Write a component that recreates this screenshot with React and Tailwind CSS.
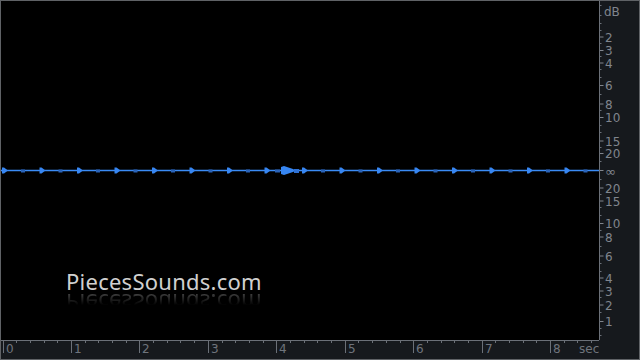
import React from "react";

const dbMarks = [
  { y: 35.5, t: "2" },
  { y: 49, t: "3" },
  { y: 61.5, t: "4" },
  { y: 84, t: "6" },
  { y: 102.5, t: "8" },
  { y: 116, t: "10" },
  { y: 139.5, t: "15" },
  { y: 152, t: "20" },
  { y: 169, t: "∞" },
  { y: 186.5, t: "20" },
  { y: 199.5, t: "15" },
  { y: 222, t: "10" },
  { y: 235.5, t: "8" },
  { y: 254.5, t: "6" },
  { y: 276.5, t: "4" },
  { y: 289.5, t: "3" },
  { y: 303.5, t: "2" },
  { y: 320, t: "1" },
];

const minorDb = [4, 14, 22, 29, 42, 55, 68, 76, 93, 109, 124, 131, 146, 160, 178, 193, 206, 214, 229, 245, 262, 270, 283, 296, 311, 327, 334];

const RightRuler = () => (
  <svg width="40" height="339" className="block shrink-0">
    <line x1="0.5" y1="0" x2="0.5" y2="339" stroke="#6b7078" />
    {minorDb.map((y) => (
      <line key={y} x1="1" y1={y + 0.5} x2="2.5" y2={y + 0.5} stroke="#6b7078" />
    ))}
    {dbMarks.map((m, i) => (
      <g key={i}>
        <line x1="1" y1={m.y + 0.5} x2="4.5" y2={m.y + 0.5} stroke="#80858d" />
        <text
          x="6"
          y={m.y + 1}
          dominantBaseline="central"
          fontSize={m.t === "∞" ? 13 : 12}
          fill="#80858d"
          fontFamily="DejaVu Sans, sans-serif"
        >
          {m.t}
        </text>
      </g>
    ))}
    <text x="5" y="11" dominantBaseline="central" fontSize="12" fill="#80858d" fontFamily="DejaVu Sans, sans-serif">
      dB
    </text>
  </svg>
);

const BottomRuler = () => {
  const step = 68.45;
  const majors = [0, 1, 2, 3, 4, 5, 6, 7, 8];
  const minors = [];
  for (let s = 0; s < 8.9; s++) {
    for (let k = 1; k < 5; k++) {
      const x = 1.5 + step * (s + k / 5);
      if (x < 596) minors.push(x);
    }
  }
  return (
    <svg width="598" height="19" className="block shrink-0">
      <line x1="0" y1="0.5" x2="598" y2="0.5" stroke="#6b7078" />
      {minors.map((x, i) => (
        <line key={i} x1={Math.round(x) + 0.5} y1="1" x2={Math.round(x) + 0.5} y2="3" stroke="#6b7078" />
      ))}
      {majors.map((s) => {
        const x = Math.round(1.5 + step * s) + 0.5;
        return (
          <g key={s}>
            <line x1={x} y1="1" x2={x} y2="13" stroke="#6b7078" />
            <text x={x + 2.5} y="13" fontSize="12" fill="#6f747c" fontFamily="DejaVu Sans, sans-serif">
              {s}
            </text>
          </g>
        );
      })}
      <text x="578" y="13" fontSize="12" fill="#6f747c" fontFamily="DejaVu Sans, sans-serif">
        sec
      </text>
    </svg>
  );
};

const Waveform = () => {
  const y = 169;
  const big = [];
  const small = [];
  for (let i = 0; i < 16; i++) {
    const x = 1 + 37.5 * i;
    if (x < 596) big.push(x);
    if (x + 19 < 596) small.push(x + 19);
  }
  return (
    <svg width="598" height="338" className="block">
      <line x1="0" y1={y + 0.5} x2="598" y2={y + 0.5} stroke="#3a8bf5" strokeWidth="1.3" />
      {small.map((x, i) => (
        <rect key={i} x={x} y={y - 0.5} width="4" height="3" fill="#2a63b8" />
      ))}
      {big.map((x, i) => (
        <polygon
          key={i}
          points={`${x},${y - 2.5} ${x + 2},${y - 2.5} ${x + 6},${y + 0.5} ${x + 2},${y + 3.5} ${x},${y + 3.5}`}
          fill="#3786f2"
        />
      ))}
      <polygon
        points={`${280},${y - 3} ${283},${y - 4} ${286},${y - 3} ${292},${y - 1} ${294},${y + 0.5} ${292},${y + 2} ${286},${y + 4} ${283},${y + 5} ${280},${y + 4}`}
        fill="#3786f2"
      />
      <rect x="274" y={y - 0.5} width="5" height="3" fill="#2a63b8" />
      <rect x="293" y={y - 1} width="5" height="4" fill="#2f72d6" />
    </svg>
  );
};

export default function App() {
  return (
    <div className="w-[640px] h-[360px] border border-[#5f6266] bg-[#16191d] flex flex-col overflow-hidden">
      <div className="flex h-[339px]">
        <div className="relative w-[598px] h-[339px] bg-black">
          <Waveform />
          <div className="absolute left-[65px] top-[269px] flex flex-col font-['Noto_Sans',sans-serif] text-[22px] leading-none tracking-[0.25px] text-[#d0d0d0] select-none">
            <span>PiecesSounds.com</span>
            <span
              aria-hidden="true"
              className="scale-y-[-1] opacity-35 [mask-image:linear-gradient(to_top,black,transparent_60%)]"
            >
              PiecesSounds.com
            </span>
          </div>
        </div>
        <RightRuler />
      </div>
      <div className="flex h-[19px]">
        <BottomRuler />
        <div className="flex-1" />
      </div>
    </div>
  );
}
